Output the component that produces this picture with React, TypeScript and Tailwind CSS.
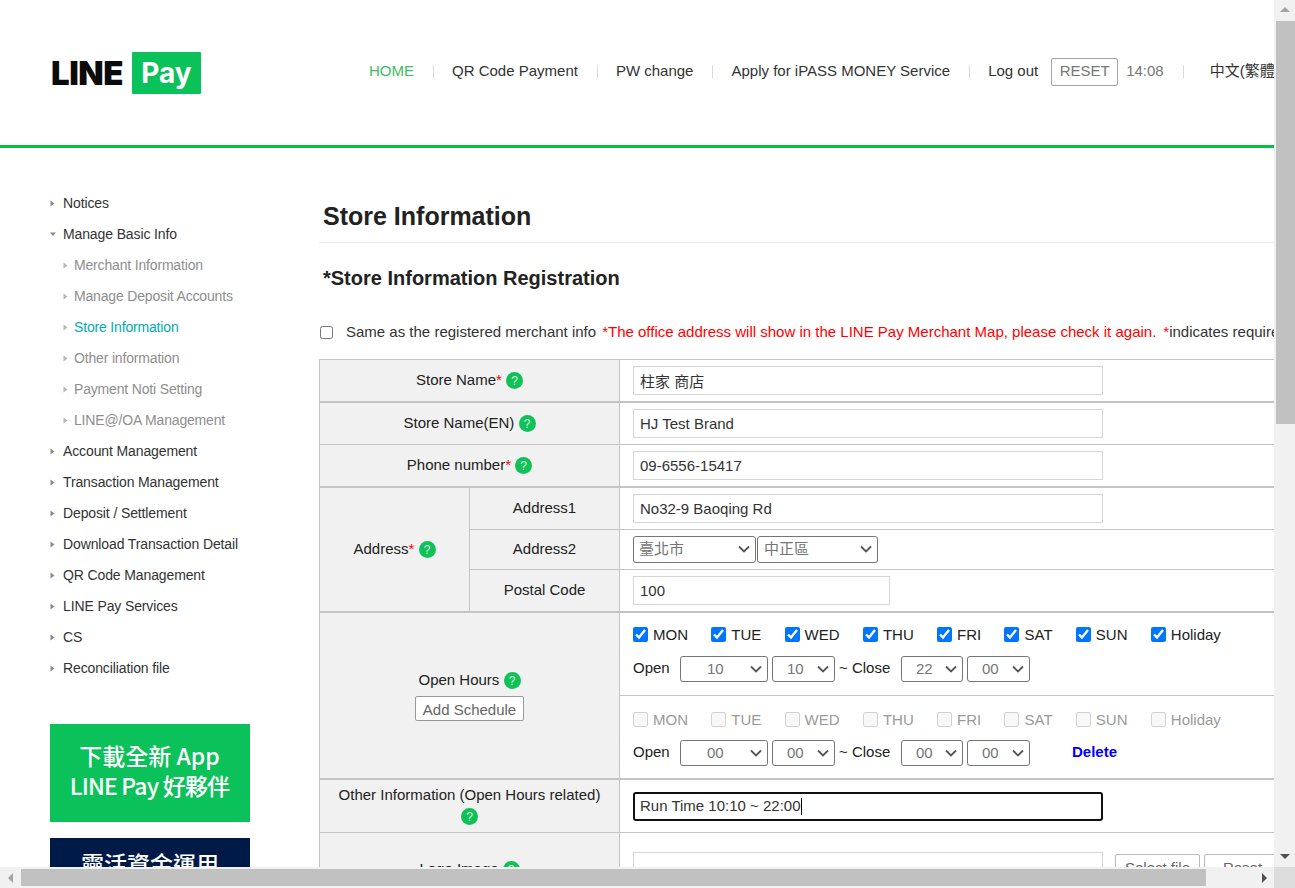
import React from "react";

const Help = ({ className = "" }: { className?: string }) => (
  <span className={"inline-flex h-[17px] w-[17px] items-center justify-center rounded-full bg-[#10c158] align-middle text-[12px] leading-none text-[#d8f5e2] " + className}>?</span>
);
const Req = () => <span className="text-[#ff0000]">*</span>;

const Tri = ({ dir, color }: { dir: "r" | "d"; color: string }) => (
  <svg width="7" height="7" viewBox="0 0 7 7" className="shrink-0">
    <polygon points={dir === "r" ? "1.5,0.5 5.5,3.5 1.5,6.5" : "1,1.5 7,1.5 4,5"} fill={color} />
  </svg>
);

const NavSep = () => <span className="ml-[19px] mr-[18px] h-[13px] w-px bg-[#d9d9d9]" />;

const sideTop = ["Account Management", "Transaction Management", "Deposit / Settlement", "Download Transaction Detail", "QR Code Management", "LINE Pay Services", "CS", "Reconciliation file"];
const sideSub = ["Merchant Information", "Manage Deposit Accounts", "Store Information", "Other information", "Payment Noti Setting", "LINE@/OA Management"];

const SideItem = ({ label, open }: { label: string; open?: boolean }) => (
  <div className="flex h-[31px] items-center gap-[7px] tracking-[-0.12px] text-[#333333]">
    <Tri dir={open ? "d" : "r"} color="#8a8a8a" />
    <span>{label}</span>
  </div>
);

const Sidebar = () => (
  <aside className="w-[319px] shrink-0 pl-[49px] pt-[40px] text-[14px] font-['Liberation_Sans',sans-serif]">
    <SideItem label="Notices" />
    <SideItem label="Manage Basic Info" open />
    {sideSub.map((s, i) => (
      <div key={s} className={"flex h-[31px] items-center gap-[5px] pl-[13px] tracking-[-0.17px] " + (i === 2 ? "text-[#00acb0]" : "text-[#8e8e8e]")}>
        <Tri dir="r" color="#b5b5b5" />
        <span>{s}</span>
      </div>
    ))}
    {sideTop.map((s) => (
      <SideItem key={s} label={s} />
    ))}
    <div className="ml-px mt-[40px] flex h-[98px] w-[200px] flex-col items-center justify-center bg-[#0bc15a] pb-[6px] pr-[1px] font-['Noto_Sans_CJK_TC',sans-serif] text-[23px] font-medium leading-[30px] text-white">
      <span>下載全新 App</span>
      <span className="tracking-[-0.85px]">LINE Pay 好夥伴</span>
    </div>
    <div className="ml-px mt-[16px] flex h-[98px] w-[200px] justify-center bg-[#001a48] pt-[10px] font-['Noto_Sans_CJK_TC',sans-serif] text-[23px] font-medium leading-[31px] text-white">
      靈活資金運用
    </div>
  </aside>
);

const Input = ({ value, w = "w-[470px]" }: { value: string; w?: string }) => (
  <input readOnly value={value} className={"h-[29px] border border-[#d6d6d6] bg-white px-[6px] text-[15px] text-[#333333] " + w} />
);

const labelCell = "border-r border-[#c4c4c4] bg-[#f1f1f1] text-center align-middle text-[#222222]";

const Sel = ({ v, w, h = "h-[26px]", pl = "pl-[14px]", arrow = 12 }: { v: string; w: string; h?: string; pl?: string; arrow?: number }) => (
  <span className={"relative block shrink-0 " + w + " " + h}>
    <select defaultValue={v} className={"block h-full w-full appearance-none rounded-[3px] border border-[#767676] bg-white text-[15px] text-[#757575] " + pl}>
      <option>{v}</option>
    </select>
    <svg width="12" height="8" viewBox="0 0 12 8" className="absolute top-1/2 -translate-y-1/2" style={{ right: arrow - 6 }}>
      <path d="M1 1.5 L6 6.5 L11 1.5" fill="none" stroke="#555555" strokeWidth="1.8" />
    </svg>
  </span>
);

const days = ["MON", "TUE", "WED", "THU", "FRI", "SAT", "SUN", "Holiday"];

const Days = ({ disabled }: { disabled?: boolean }) => (
  <div className={"flex gap-[23.3px] " + (disabled ? "text-[#9a9a9a]" : "text-[#222222]")}>
    {days.map((d) => (
      <label key={d} className="flex items-center gap-[5px]">
        <input type="checkbox" disabled={disabled} defaultChecked={!disabled} className="m-0 h-[15px] w-[15px] accent-[#0075ff]" />
        <span>{d}</span>
      </label>
    ))}
  </div>
);

const Times = ({ v, del }: { v: string[]; del?: boolean }) => (
  <div className="flex items-center text-[#222222]">
    <span className="-mt-[1px] w-[47px]">Open</span>
    <Sel v={v[0]} w="w-[88px]" pl="pl-[26px]" />
    <Sel v={v[1]} w="w-[63px] ml-[4px]" />
    <span className="-mt-[2px] ml-[4px] w-[62px]">~ Close</span>
    <Sel v={v[2]} w="w-[62px]" />
    <Sel v={v[3]} w="w-[63px] ml-[4px]" />
    {del && <span className="-mt-[2px] ml-[42px] font-bold text-[#0000ff]">Delete</span>}
  </div>
);

const Form = () => (
  <table className="w-[1100px] table-fixed border-separate border-spacing-0 border-l border-t border-[#c4c4c4] text-[15px]">
    <colgroup>
      <col className="w-[150px]" />
      <col className="w-[150px]" />
      <col />
    </colgroup>
    <tbody>
      <tr className="h-[43px]">
        <td colSpan={2} className={labelCell + " border-b-2 border-b-[#c4c4c4]"}>Store Name<Req /> <Help /></td>
        <td className="border-b-2 border-[#c4c4c4] pl-[13px]"><Input value="柱家 商店" /></td>
      </tr>
      <tr className="h-[42px]">
        <td colSpan={2} className={labelCell + " border-b border-b-[#c4c4c4]"}>Store Name(EN) <Help /></td>
        <td className="border-b border-[#c4c4c4] pl-[13px]"><Input value="HJ Test Brand" /></td>
      </tr>
      <tr className="h-[43px]">
        <td colSpan={2} className={labelCell + " border-b-2 border-b-[#c4c4c4]"}>Phone number<Req /> <Help /></td>
        <td className="border-b-2 border-[#c4c4c4] pl-[13px]"><Input value="09-6556-15417" /></td>
      </tr>
      <tr className="h-[42px]">
        <td rowSpan={3} className={labelCell + " border-b-2 border-b-[#c4c4c4]"}>Address<Req /> <Help /></td>
        <td className={labelCell + " border-b border-b-[#c4c4c4]"}>Address1</td>
        <td className="border-b border-[#c4c4c4] pl-[13px]"><Input value="No32-9 Baoqing Rd" /></td>
      </tr>
      <tr className="h-[40px]">
        <td className={labelCell + " border-b border-b-[#c4c4c4]"}>Address2</td>
        <td className="border-b border-[#c4c4c4] pl-[13px]">
          <div className="flex gap-px">
            <Sel v="臺北市" w="w-[123px]" h="h-[27px]" pl="pl-[5px]" />
            <Sel v="中正區" w="w-[121px]" h="h-[27px]" pl="pl-[6px]" arrow={12} />
          </div>
        </td>
      </tr>
      <tr className="h-[43px]">
        <td className={labelCell + " border-b-2 border-b-[#c4c4c4]"}>Postal Code</td>
        <td className="border-b-2 border-[#c4c4c4] pl-[13px]"><Input value="100" w="w-[257px]" /></td>
      </tr>
      <tr>
        <td colSpan={2} className={labelCell + " border-b-2 border-b-[#c4c4c4]"}>
          <div>Open Hours <Help /></div>
          <button className="mt-[5px] h-[25px] w-[109px] rounded-[2px] border border-[#999999] bg-white pt-[2px] text-[15px] leading-none text-[#666666]">Add Schedule</button>
        </td>
        <td className="border-b-2 border-[#c4c4c4] p-0">
          <div className="flex h-[83px] flex-col gap-[10px] border-b border-[#c4c4c4] pl-[13px] pt-[11px]">
            <Days />
            <Times v={["10", "10", "22", "00"]} />
          </div>
          <div className="flex h-[82px] flex-col gap-[9px] pl-[13px] pt-[13px]">
            <Days disabled />
            <Times v={["00", "00", "00", "00"]} del />
          </div>
        </td>
      </tr>
      <tr className="h-[53px]">
        <td colSpan={2} className={labelCell + " border-b border-b-[#c4c4c4] pt-[1px]"}>
          <div className="leading-[20px]">Other Information (Open Hours related)</div>
          <Help />
        </td>
        <td className="border-b border-[#c4c4c4] pl-[13px] pt-[1px]">
          <div className="flex h-[29px] w-[470px] items-center rounded-[3px] border-2 border-[#101010] bg-white pl-[5px] text-[#333333]">
            Run Time 10:10 ~ 22:00<span className="h-[17px] w-px bg-black" />
          </div>
        </td>
      </tr>
      <tr className="h-[74px]">
        <td colSpan={2} className={labelCell}>
          <div className="flex items-center justify-center gap-[4px]">
            <span>Logo Image</span>
            <Help />
          </div>
        </td>
        <td className="pl-[13px] align-top">
          <div className="flex pt-[19px]">
            <div className="h-[29px] w-[470px] shrink-0 border border-[#d6d6d6] bg-white" />
            <button className="ml-[12px] mt-[2px] h-[29px] w-[85px] shrink-0 rounded-[2px] border border-[#bbbbbb] bg-white text-[#666666]">Select file</button>
            <button className="ml-[4px] mt-[2px] h-[29px] w-[77px] shrink-0 rounded-[2px] border border-[#bbbbbb] bg-white text-[#666666]">Reset</button>
          </div>
        </td>
      </tr>
    </tbody>
  </table>
);

const Main = () => (
  <main className="min-w-0 flex-1 pt-[51px] text-[15px]">
    <h1 className="h-[44px] border-b border-[#eeeeee] pl-[4px] text-[25px] font-bold leading-[34px] text-[#222222]">Store Information</h1>
    <h2 className="mt-[21px] pl-[4px] text-[20px] font-bold leading-[28px] text-[#222222]">*Store Information Registration</h2>
    <div className="mt-[29px] flex items-center whitespace-nowrap">
      <input type="checkbox" className="m-0 ml-px h-[15px] w-[15px]" />
      <span className="ml-[13px] text-[#333333]">Same as the registered merchant info</span>
      <span className="ml-[6px] text-[#ff0000]">*The office address will show in the LINE Pay Merchant Map, please check it again.</span>
      <span className="ml-[7px] text-[#333333]"><span className="text-[#ff0000]">*</span>indicates required fields</span>
    </div>
    <div className="mt-[15px]">
      <Form />
    </div>
  </main>
);

const Header = () => (
  <header className="flex h-[148px] shrink-0 items-start whitespace-nowrap border-b-[3px] border-[#06c13f]">
    <div className="ml-[51px] mt-[52px] flex w-[318px] shrink-0 items-start">
      <span className="mt-[4px] w-[81px] font-['Inter',sans-serif] text-[33px] font-black leading-[34px] tracking-[-0.5px] text-[#0b0b0b]">LINE</span>
      <span className="flex h-[42px] w-[69px] items-center justify-center rounded-[1px] bg-[#0bc15a] font-['Inter',sans-serif] text-[28px] font-bold leading-none text-white">Pay</span>
    </div>
    <nav className="mt-[58px] flex h-[28px] items-center text-[15px] text-[#333333] [&>span]:-mt-[2px]">
      <span className="text-[#3dbd60]">HOME</span>
      <NavSep />
      <span>QR Code Payment</span>
      <NavSep />
      <span>PW change</span>
      <NavSep />
      <span>Apply for iPASS MONEY Service</span>
      <NavSep />
      <span>Log out</span>
      <button className="ml-[13px] h-[28px] w-[67px] rounded-[2px] border border-[#a3a3a3] pb-[2px] text-[15px] text-[#777777]">RESET</button>
      <span className="ml-[8px] text-[#777777]">14:08</span>
      <NavSep />
      <span className="ml-[8px] font-['Liberation_Sans','Noto_Sans_CJK_TC',sans-serif]">中文(繁體)</span>
    </nav>
  </header>
);

const Arrow = ({ d, c }: { d: "u" | "d" | "l" | "r"; c: string }) => {
  const pts = { u: "1,7 11,7 6,2", d: "1,3 11,3 6,8", l: "8,1 8,11 3,6", r: "4,1 4,11 9,6" }[d];
  return (
    <svg width="12" height="12" viewBox="0 0 12 12">
      <polygon points={pts} fill={c} />
    </svg>
  );
};

export default function App() {
  return (
    <div className="flex h-[888px] w-[1295px] flex-col overflow-hidden bg-white font-['Liberation_Sans','Noto_Sans_CJK_TC',sans-serif]">
      <div className="flex min-h-0 flex-1">
        <div className="flex min-w-0 flex-1 flex-col overflow-hidden">
          <Header />
          <div className="flex min-h-0 flex-1">
            <Sidebar />
            <Main />
          </div>
        </div>
        <div className="flex w-[21px] shrink-0 flex-col items-center bg-[#f1f1f1]">
          <div className="flex h-[21px] w-full shrink-0 items-center justify-center"><Arrow d="u" c="#a3a3a3" /></div>
          <div className="ml-[2px] h-[403px] w-[19px] bg-[#c1c1c1]" />
          <div className="mt-auto flex h-[21px] w-full shrink-0 items-center justify-center"><Arrow d="d" c="#505050" /></div>
        </div>
      </div>
      <div className="flex h-[21px] shrink-0 bg-[#f1f1f1]">
        <div className="flex w-[21px] shrink-0 items-center justify-center"><Arrow d="l" c="#a3a3a3" /></div>
        <div className="mt-[2px] h-[17px] w-[1185px] bg-[#c1c1c1]" />
        <div className="ml-auto flex w-[21px] shrink-0 items-center justify-center"><Arrow d="r" c="#505050" /></div>
        <div className="w-[21px] shrink-0 bg-[#dcdcdc]" />
      </div>
    </div>
  );
}
